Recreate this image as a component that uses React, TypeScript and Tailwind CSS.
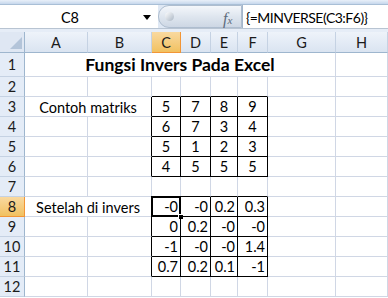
import React from "react";

const COLS = ["A", "B", "C", "D", "E", "F", "G", "H"];
const W = [63, 64, 29, 30, 27, 30, 68, 52];

const m1: Record<number, string[]> = {
  3: ["5", "7", "8", "9"],
  4: ["6", "7", "3", "4"],
  5: ["5", "1", "2", "3"],
  6: ["4", "5", "5", "5"],
};
const m2: Record<number, string[]> = {
  8: ["-0", "-0", "0.2", "0.3"],
  9: ["0", "0.2", "-0", "-0"],
  10: ["-1", "-0", "-0", "1.4"],
  11: ["0.7", "0.2", "0.1", "-1"],
};

function inMat(r: number, c: number) {
  return ((r >= 3 && r <= 6) || (r >= 8 && r <= 11)) && c >= 2 && c <= 5;
}

const font = { fontFamily: "Lato, 'Open Sans', sans-serif" };

function Cell({
  r,
  c,
  width,
  children,
  align = "center",
}: {
  r: number;
  c: number;
  width: number;
  children?: React.ReactNode;
  align?: "center" | "right";
}) {
  const rightBlack = inMat(r, c) || inMat(r, c + 1);
  const bottomBlack = inMat(r, c) || inMat(r + 1, c);
  const selected = r === 8 && c === 2;
  return (
    <div
      className={
        "relative flex items-center shrink-0 h-full border-r border-b text-[14.5px] text-black leading-none " +
        (rightBlack ? "border-r-black " : "border-r-[#d0d7e5] ") +
        (bottomBlack ? "border-b-black " : "border-b-[#d0d7e5] ") +
        (align === "right" ? "justify-end pr-[2px]" : "justify-center")
      }
      style={{ width }}
    >
      <span className="pt-[2px]">{children}</span>
      {selected && (
        <>
          <div className="absolute left-[-1px] top-[-1px] right-[-1px] bottom-[-1px] border-2 border-black pointer-events-none" />
          <div className="absolute right-[-4px] bottom-[-4px] w-[6px] h-[6px] bg-black border border-white pointer-events-none" />
        </>
      )}
    </div>
  );
}

function RowHeader({ n, h, sel }: { n: number; h: number; sel?: boolean }) {
  return (
    <div
      className={
        "shrink-0 w-[25px] flex items-center justify-center border-r border-b text-[14.5px] leading-none " +
        (sel
          ? "bg-gradient-to-b from-[#f9d99f] to-[#f1c15f] border-r-[#f29536] border-b-[#f29536] text-[#1b1b1b]"
          : "bg-[#e4ecf7] border-r-[#9eb6ce] border-b-[#c5d2e3] text-[#1b1b1b]")
      }
      style={{ height: h }}
    >
      <span className="pt-[2px]">{n}</span>
    </div>
  );
}

export default function App() {
  const rows = [2, 3, 4, 5, 6, 7, 8, 9, 10, 11, 12];
  return (
    <div className="w-[388px] h-[298px] overflow-hidden bg-white" style={font}>
      {/* formula bar */}
      <div className="h-[32px] flex flex-col bg-[#dfe8f4]">
        <div className="h-[5px] bg-gradient-to-b from-[#e9f0f9] to-[#c6d7ec] border-b border-[#a9bfd6]" />
        <div className="h-[23px] flex">
          <div className="w-[158px] bg-white flex items-center relative">
            <span className="w-[140px] text-center text-[14.5px] text-black pt-[2px]">C8</span>
            <svg width="8" height="5" viewBox="0 0 8 5" className="absolute left-[143px] top-[10px]">
              <path d="M0 0 H8 L4 5 Z" fill="#000" />
            </svg>
          </div>
          <div className="w-[84px] relative flex items-center rounded-l-[11px] bg-gradient-to-b from-[#f4f7fb] via-[#dfe6ef] to-[#cdd7e4] border border-[#aebdcf]">
            <div className="absolute left-[6px] top-[6px] w-[9px] h-[9px] rounded-full bg-gradient-to-br from-[#ffffff] to-[#aab6c4]" />
            <span
              className="absolute left-[64px] top-[1px] text-[16px] text-[#5d6b7c] italic"
              style={{ fontFamily: "'Liberation Serif', serif" }}
            >
              f<span className="text-[11px]">x</span>
            </span>
          </div>
          <div className="flex-1 bg-white border-l border-[#a3b6cc] flex items-center pl-[3px] text-[14px] tracking-[-0.5px] text-black">
            <span className="pt-[2px]">{"{=MINVERSE(C3:F6)}"}</span>
          </div>
        </div>
        <div className="flex-1 border-t border-[#b8c4d2] bg-[#e6edf7]" />
      </div>

      {/* column headers */}
      <div className="h-[21px] flex">
        <div className="w-[25px] shrink-0 h-full bg-[#dfe7f3] border-r border-b border-[#9eb6ce] relative">
          <svg width="12" height="12" viewBox="0 0 12 12" className="absolute right-[2px] bottom-[3px]">
            <path d="M12 0 V12 H0 Z" fill="#b3c4d9" />
          </svg>
        </div>
        {COLS.map((c, i) => (
          <div
            key={c}
            className={
              "shrink-0 h-full flex items-center justify-center border-r border-b text-[14.5px] leading-none " +
              (i === 2
                ? "bg-gradient-to-b from-[#f9d99f] to-[#f1c15f] border-r-[#f29536] border-b-[#f29536] text-[#1b1b1b]"
                : "bg-gradient-to-b from-[#eef3fa] to-[#dae4f1] border-r-[#c5d2e3] border-b-[#9eb6ce] text-[#1b1b1b]")
            }
            style={{ width: W[i] }}
          >
            <span className="pt-[2px]">{c}</span>
          </div>
        ))}
      </div>

      {/* row 1 */}
      <div className="h-[24px] flex">
        <RowHeader n={1} h={24} />
        <div className="shrink-0 w-[311px] h-full flex items-center justify-center border-r border-b border-[#d0d7e5]">
          <span className="font-bold text-[17.5px] text-black pt-[1px]">Fungsi Invers Pada Excel</span>
        </div>
        <div className="shrink-0 h-full border-r border-b border-[#d0d7e5]" style={{ width: W[7] }} />
      </div>

      {rows.map((r) => (
        <div key={r} className="h-[20px] flex">
          <RowHeader n={r} h={20} sel={r === 8} />
          {r === 3 || r === 8 ? (
            <div className="shrink-0 w-[127px] h-full flex items-center justify-center border-r border-b border-b-[#d0d7e5] border-r-black text-[14.5px] text-black">
              <span className="pt-[2px]">{r === 3 ? "Contoh matriks" : "Setelah di invers"}</span>
            </div>
          ) : (
            <>
              <Cell r={r} c={0} width={W[0]} />
              <Cell r={r} c={1} width={W[1]} />
            </>
          )}
          {[2, 3, 4, 5, 6, 7].map((c) => {
            const v = m1[r] ? m1[r][c - 2] : m2[r] ? m2[r][c - 2] : undefined;
            return (
              <Cell key={c} r={r} c={c} width={W[c]} align={m2[r] ? "right" : "center"}>
                {c <= 5 ? v : null}
              </Cell>
            );
          })}
        </div>
      ))}
    </div>
  );
}
